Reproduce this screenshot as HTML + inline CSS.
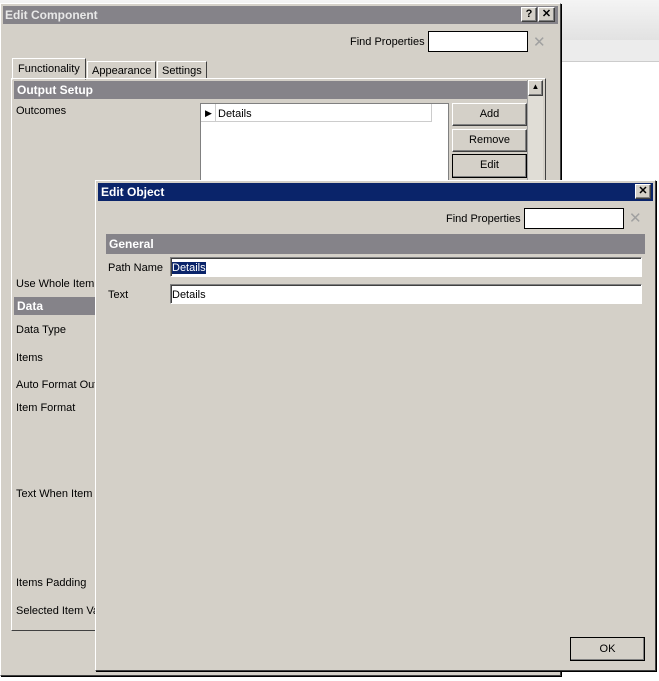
<!DOCTYPE html>
<html><head><style>
*{box-sizing:border-box;margin:0;padding:0}
body{width:659px;height:681px;position:relative;overflow:hidden;background:#fff;font-family:"Liberation Sans",sans-serif;font-size:11px;color:#000}
.a{position:absolute}
.win{background:#d4d0c8;border:1px solid;border-color:#fff #404040 #404040 #fff;box-shadow:1px 1px 0 #000}
.lbl{position:absolute;white-space:nowrap;margin-top:1px}
.hdr{position:absolute;background:#858389;color:#fff;font-weight:bold;font-size:12px;padding-left:3px;line-height:17px}
.inp{position:absolute;background:#fff;border:1px solid;border-color:#808080 #fff #fff #808080;box-shadow:inset 1px 1px 0 #404040}
.btn{position:absolute;background:#d4d0c8;border:1px solid;border-color:#fff #404040 #404040 #fff;box-shadow:inset -1px -1px 0 #808080;text-align:center;line-height:21px}
</style></head><body>
<div class="a" style="left:0;top:0;width:659px;height:40px;background:linear-gradient(#f4f4f4,#e2e2e2)"></div>
<div class="a" style="left:561px;top:40px;width:98px;height:22px;background:#ececec;border-bottom:1px solid #ccc"></div>

<div class="a win" style="left:0;top:3px;width:561px;height:673px"></div>
<div class="a" style="left:3px;top:6px;width:555px;height:18px;background:#858389;color:#e8e8e8;font-weight:bold;font-size:12px;line-height:19px;padding-left:2px">Edit Component</div>
<div class="btn" style="left:521px;top:7px;width:16px;height:15px;line-height:13px;font-weight:bold">?</div>
<div class="btn" style="left:538px;top:7px;width:17px;height:15px;line-height:13px;font-weight:bold">✕</div>
<div class="lbl" style="left:350px;top:35px">Find Properties</div>
<div class="a" style="left:428px;top:31px;width:100px;height:21px;background:#fff;border:1px solid #000"></div>
<div class="lbl" style="left:533px;top:32px;color:#a0a0a0;font-size:15px">✕</div>
<div class="a" style="left:12px;top:58px;width:74px;height:22px;background:#d4d0c8;border:1px solid;border-color:#fff #404040 transparent #fff;padding:4px 0 0 5px">Functionality</div>
<div class="a" style="left:87px;top:61px;width:69px;height:18px;border:1px solid;border-color:#fff #404040 transparent #fff;padding:3px 0 0 4px">Appearance</div>
<div class="a" style="left:157px;top:61px;width:50px;height:18px;border:1px solid;border-color:#fff #404040 transparent #fff;padding:3px 0 0 4px">Settings</div>
<div class="a" style="left:11px;top:78px;width:535px;height:553px;border:1px solid;border-color:#fff #404040 #404040 #fff"></div>
<div class="hdr" style="left:14px;top:81px;width:513px;line-height:18px">Output Setup</div>
<div class="a" style="left:527px;top:80px;width:16px;height:548px;background:#e0ddd6;border-left:1px solid #a0a0a0"></div>
<div class="btn" style="left:528px;top:80px;width:15px;height:16px;line-height:12px;font-size:8px">▲</div>
<div class="lbl" style="left:16px;top:104px">Outcomes</div>
<div class="a" style="left:200px;top:103px;width:249px;height:80px;background:#fff;border:1px solid #808080"></div>
<div class="a" style="left:201px;top:104px;width:231px;height:18px;border-bottom:1px solid #ccc;border-right:1px solid #ccc"></div>
<div class="a" style="left:201px;top:104px;width:15px;height:18px;border-right:1px solid #ccc;font-size:9px;padding:4px 0 0 4px">▶</div>
<div class="lbl" style="left:218px;top:107px">Details</div>
<div class="btn" style="left:452px;top:103px;width:75px;height:23px">Add</div>
<div class="btn" style="left:452px;top:129px;width:75px;height:23px">Remove</div>
<div class="btn" style="left:452px;top:154px;width:75px;height:24px;border:1px solid #000">Edit</div>
<div class="lbl" style="left:16px;top:277px">Use Whole Item</div>
<div class="hdr" style="left:14px;top:297px;width:82px;line-height:18px">Data</div>
<div class="lbl" style="left:16px;top:323px">Data Type</div>
<div class="lbl" style="left:16px;top:351px">Items</div>
<div class="lbl" style="left:16px;top:378px">Auto Format Out</div>
<div class="lbl" style="left:16px;top:401px">Item Format</div>
<div class="lbl" style="left:16px;top:487px">Text When Item</div>
<div class="lbl" style="left:16px;top:576px">Items Padding</div>
<div class="lbl" style="left:16px;top:604px">Selected Item Va</div>

<div class="a win" style="left:95px;top:180px;width:561px;height:491px"></div>
<div class="a" style="left:98px;top:183px;width:555px;height:18px;background:#0a246a;color:#fff;font-weight:bold;font-size:12px;line-height:19px;padding-left:3px">Edit Object</div>
<div class="btn" style="left:635px;top:184px;width:16px;height:15px;line-height:13px;font-weight:bold">✕</div>
<div class="lbl" style="left:446px;top:212px">Find Properties</div>
<div class="a" style="left:524px;top:208px;width:100px;height:21px;background:#fff;border:1px solid #000"></div>
<div class="lbl" style="left:629px;top:208px;color:#a0a0a0;font-size:15px">✕</div>
<div class="hdr" style="left:106px;top:234px;width:539px;height:20px;line-height:20px">General</div>
<div class="lbl" style="left:108px;top:261px">Path Name</div>
<div class="inp" style="left:170px;top:257px;width:472px;height:20px"></div>
<div class="lbl" style="left:172px;top:261px;background:#0a246a;color:#fff">Details</div>
<div class="lbl" style="left:108px;top:288px">Text</div>
<div class="inp" style="left:170px;top:284px;width:472px;height:20px"></div>
<div class="lbl" style="left:172px;top:288px">Details</div>
<div class="btn" style="left:570px;top:637px;width:75px;height:24px;border:1px solid #000;line-height:23px">OK</div>
</body></html>
